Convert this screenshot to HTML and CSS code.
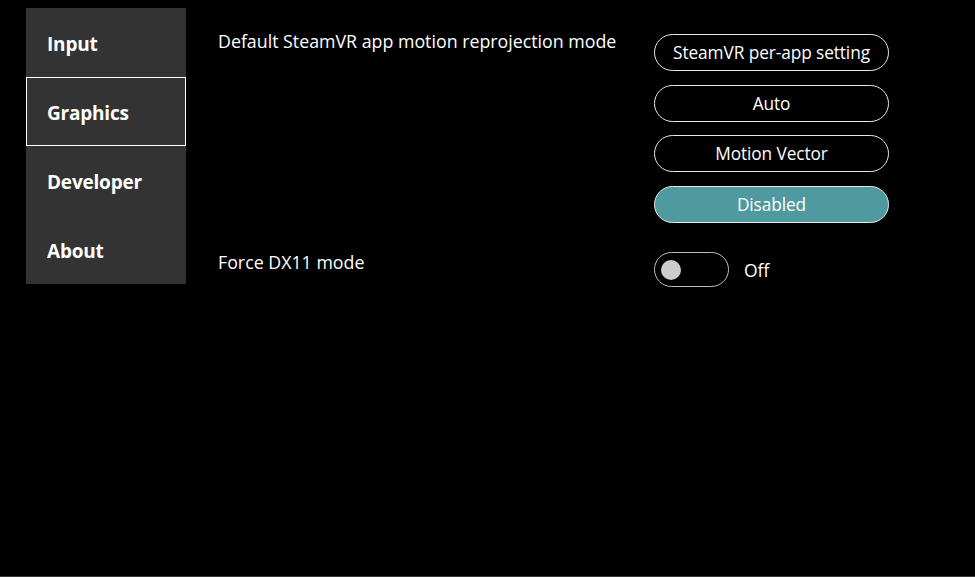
FILE: index.html
```html
<!DOCTYPE html>
<html>
    <head>
        <title>Settings</title>
        <link rel="stylesheet" href="styles.css">
    </head>
    <body>
        <div class="window">
            <ul class="nav">
                <li class="nav-item">Input</li>
                <li class="nav-item selected">Graphics</li>
                <li class="nav-item">Developer</li>
                <li class="nav-item">About</li>
            </ul>
            <div class="settings">
                <div class="setting">
                    <div class="label">Default SteamVR app motion reprojection mode</div>
                    <div class="options">
                        <button class="option">SteamVR per-app setting</button>
                        <button class="option">Auto</button>
                        <button class="option">Motion Vector</button>
                        <button class="option active">Disabled</button>
                    </div>
                </div>
                <div class="setting toggle-row">
                    <div class="label">Force DX11 mode</div>
                    <div class="toggle-wrap">
                        <div class="toggle"><span class="knob"></span></div>
                        <span class="toggle-text">Off</span>
                    </div>
                </div>
            </div>
        </div>
    </body>
</html>
```

FILE: styles.css
```css
html, body {
    height: 100%;
}
body {
    font-family: "Open Sans", "Noto Sans", sans-serif;
    background-color: #000;
    color: #fff;
    margin: 0;
    box-sizing: border-box;
    border-bottom: 1px solid #3a3a3a;
    overflow: hidden;
}
.window {
    display: flex;
    align-items: flex-start;
    padding: 8px 0 0 26px;
}
.nav {
    list-style-type: none;
    margin: 0;
    padding: 0;
    width: 160px;
    background-color: #333;
    flex-shrink: 0;
}
.nav-item {
    height: 69px;
    box-sizing: border-box;
    padding: 3px 0 0 21px;
    display: flex;
    align-items: center;
    font-size: 19px;
    font-weight: bold;
    letter-spacing: -0.2px;
}
.nav-item.selected {
    border: 1px solid #fff;
    padding-left: 20px;
}
.settings {
    padding-left: 32px;
    flex: 1;
}
.setting {
    display: flex;
}
.label {
    width: 436px;
    font-size: 17.8px;
    padding-top: 21px;
}
.options {
    display: flex;
    flex-direction: column;
    gap: 13.7px;
    padding-top: 26px;
}
.option {
    width: 235px;
    height: 37px;
    border: 1px solid #e8e8e8;
    border-radius: 19px;
    background-color: #000;
    color: #fff;
    font-family: inherit;
    font-size: 17.3px;
    letter-spacing: -0.1px;
    padding: 0;
    cursor: pointer;
}
.option.active {
    background-color: #4f9a9e;
}
.toggle-row {
    margin-top: 17px;
}
.toggle-row .label {
    padding-top: 10px;
}
.toggle-wrap {
    display: flex;
    align-items: center;
    gap: 15px;
    padding-top: 12px;
    height: 35px;
}
.toggle {
    width: 75px;
    height: 35px;
    box-sizing: border-box;
    border: 1px solid #bdbdbd;
    border-radius: 18px;
    display: flex;
    align-items: center;
    padding-left: 6px;
}
.knob {
    width: 20px;
    height: 20px;
    border-radius: 50%;
    background-color: #ccc;
}
.toggle-text {
    font-size: 17.5px;
    padding-top: 1px;
}
```
